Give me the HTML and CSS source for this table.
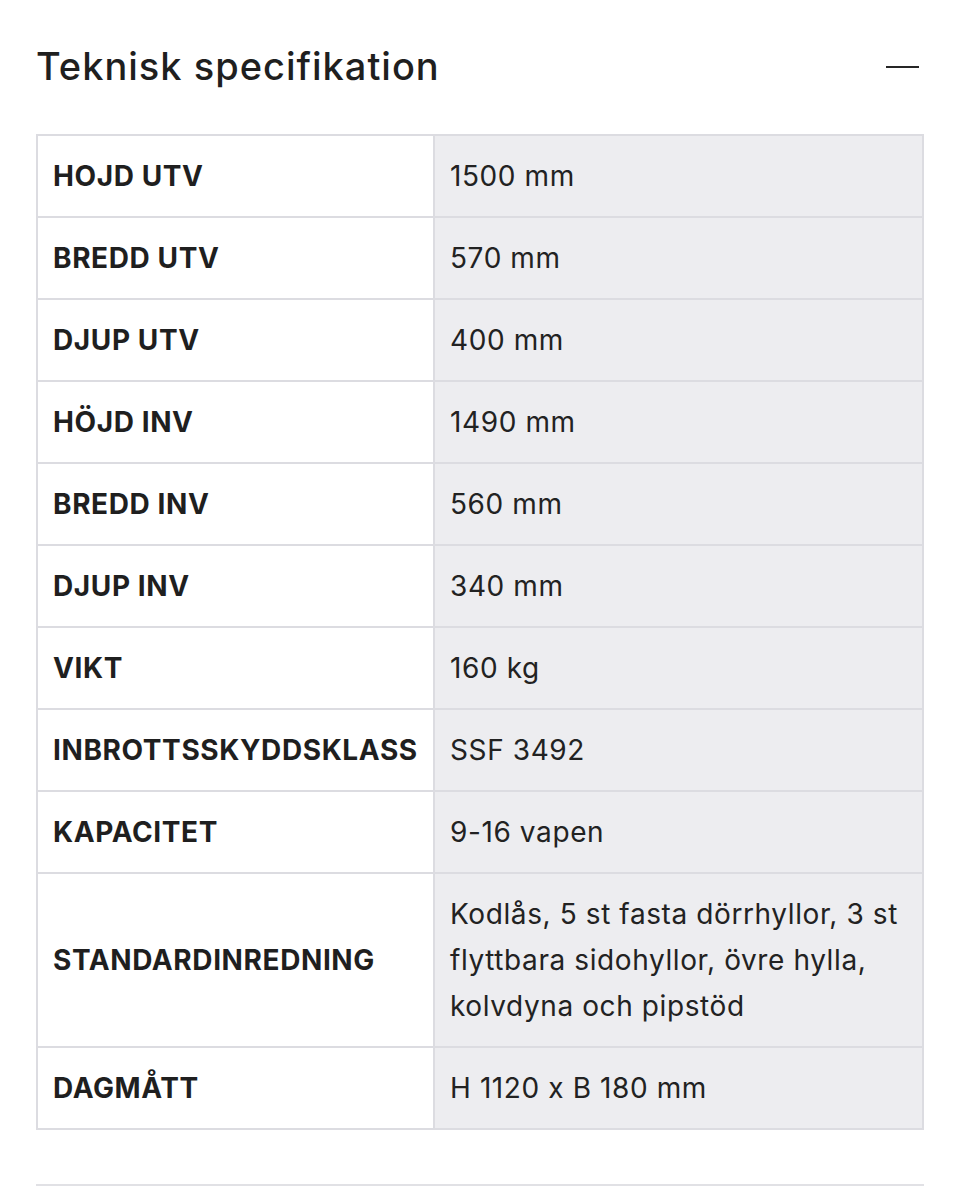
FILE: index.html
```html
<!DOCTYPE html>
<html lang="sv">
<head>
<meta charset="utf-8">
<title>Teknisk specifikation</title>
<link rel="stylesheet" href="styles.css">
</head>
<body>
<div class="page">
  <div class="header">
    <h2 class="title">Teknisk specifikation</h2>
    <span class="minus" aria-hidden="true"></span>
  </div>
  <table class="spec">
    <tbody>
      <tr><th>HOJD UTV</th><td>1500 mm</td></tr>
      <tr><th>BREDD UTV</th><td>570 mm</td></tr>
      <tr><th>DJUP UTV</th><td>400 mm</td></tr>
      <tr><th>HÖJD INV</th><td>1490 mm</td></tr>
      <tr><th>BREDD INV</th><td>560 mm</td></tr>
      <tr><th>DJUP INV</th><td>340 mm</td></tr>
      <tr><th>VIKT</th><td>160 kg</td></tr>
      <tr><th>INBROTTSSKYDDSKLASS</th><td>SSF 3492</td></tr>
      <tr><th>KAPACITET</th><td>9-16 vapen</td></tr>
      <tr><th>STANDARDINREDNING</th><td>Kodlås, 5 st fasta dörrhyllor, 3 st flyttbara sidohyllor, övre hylla, kolvdyna och pipstöd</td></tr>
      <tr><th>DAGMÅTT</th><td>H 1120 x B 180 mm</td></tr>
    </tbody>
  </table>
  <div class="rule"></div>
</div>
</body>
</html>
```

FILE: styles.css
```css
* { box-sizing: border-box; }
html, body { margin: 0; padding: 0; background: #ffffff; }
body {
  font-family: Inter, "Noto Sans", sans-serif;
  color: #1f1f1f;
}
.page {
  padding: 0 36px;
}
.header {
  height: 134px;
  display: flex;
  align-items: center;
  justify-content: space-between;
}
.title {
  margin: 0 0 3px 0;
  font-family: Inter, "Noto Sans", sans-serif;
  font-weight: 500;
  font-size: 38px;
  letter-spacing: 1px;
  color: #1f1f1f;
}
.minus {
  display: block;
  width: 33px;
  height: 2.5px;
  background: #262626;
  margin-right: 5px;
}
.spec {
  width: 100%;
  border-collapse: collapse;
  border: 2px solid #dcdce1;
}
.spec th,
.spec td {
  border: 2px solid #dcdce1;
  padding: 17px 14px 17px 15px;
  line-height: 46px;
  font-size: 28px;
  letter-spacing: 0.6px;
  vertical-align: middle;
  text-align: left;
}
.spec th {
  width: 397px;
  font-weight: 700;
  background: #ffffff;
  color: #1f1f1f;
  white-space: nowrap;
}
.spec td {
  background: #ededf0;
  font-weight: 400;
  color: #222222;
}
.rule {
  margin-top: 54px;
  height: 2px;
  background: #e1e1e5;
}
```
